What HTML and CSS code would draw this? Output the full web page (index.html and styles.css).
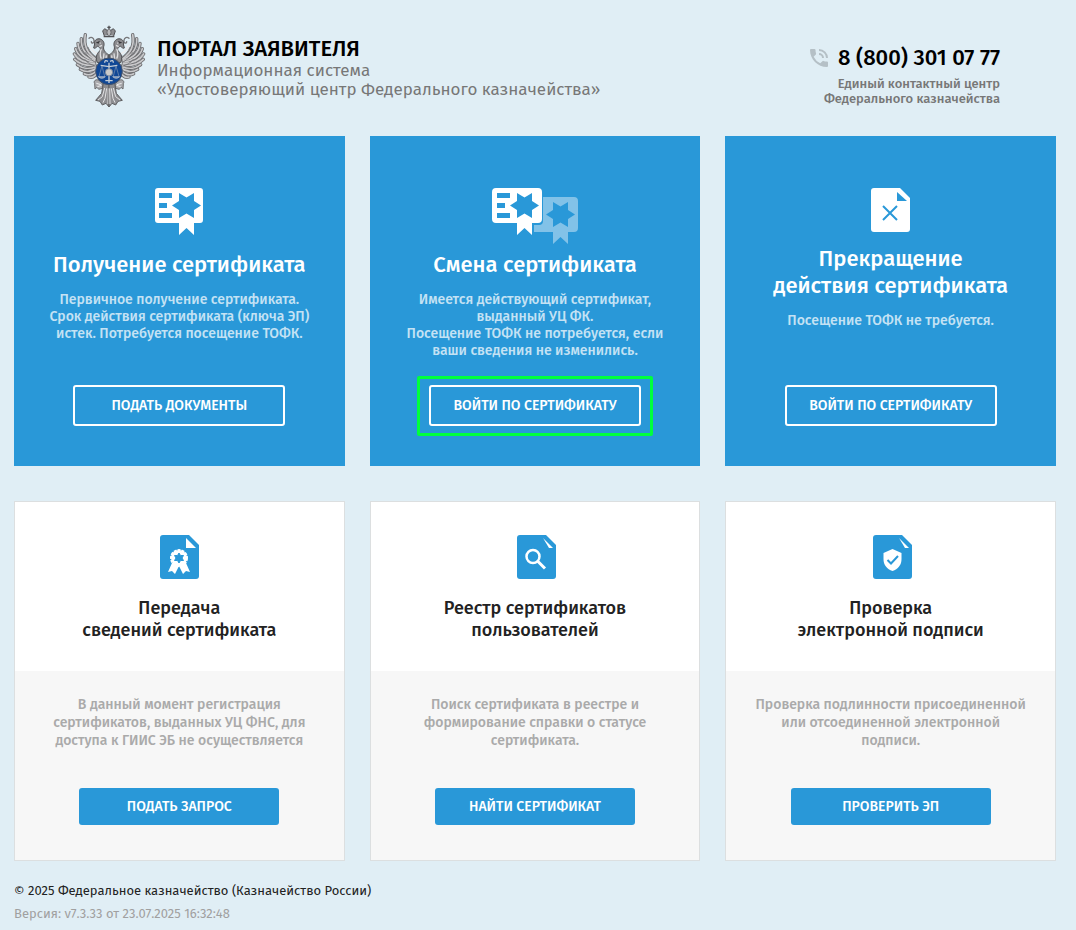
FILE: index.html
```
<!DOCTYPE html>
<html lang="ru">
<head>
  <meta charset="UTF-8">
  <meta name="viewport" content="width=device-width, initial-scale=1">
  <title>Портал заявителя</title>
  <link rel="stylesheet" href="styles.css">
</head>
<body>
  <!-- Shared shapes -->
  <svg class="defs" width="0" height="0" aria-hidden="true">
    <defs>
      <path id="cert" fill-rule="evenodd" d="M3 0H45a3 3 0 0 1 3 3V32a3 3 0 0 1-3 3H39V47L31.5 40 24 47V35H3a3 3 0 0 1-3-3V3a3 3 0 0 1 3-3ZM4 5V10H17V5ZM4 15V20H12V15ZM4 25V30H17V25ZM17 17.5L24 22V30L31.5 25.500L39 30V22L46 17.500L39 13V5L31.500 9.500L24 5V13Z"/>
      <path id="doc" d="M3 0H29L39 10V41a3 3 0 0 1-3 3H3a3 3 0 0 1-3-3V3a3 3 0 0 1 3-3Z"/>
      <g id="eagle-half">
        <g fill="none" stroke-linecap="round">
          <g stroke="#69696c" stroke-width="10">
            <path d="M106 128C82 112 70 88 76 56"/><path d="M104 130C78 118 62 98 64 68"/><path d="M104 134C76 126 56 108 54 82"/><path d="M104 138C74 134 52 118 47 98"/><path d="M104 143C76 142 54 132 43 114"/><path d="M106 148C80 150 58 144 44 130"/><path d="M108 152C88 160 66 158 52 146"/><path d="M110 156C96 168 76 170 61 160"/><path d="M112 160C102 176 86 180 73 173"/><path d="M114 164C108 180 98 186 87 183"/>
          </g>
          <g stroke="#c9c9cb" stroke-width="5">
            <path d="M106 128C82 112 70 88 76 56"/><path d="M104 130C78 118 62 98 64 68"/><path d="M104 134C76 126 56 108 54 82"/><path d="M104 138C74 134 52 118 47 98"/><path d="M104 143C76 142 54 132 43 114"/><path d="M106 148C80 150 58 144 44 130"/><path d="M108 152C88 160 66 158 52 146"/><path d="M110 156C96 168 76 170 61 160"/><path d="M112 160C102 176 86 180 73 173"/><path d="M114 164C108 180 98 186 87 183"/>
          </g>
          <path d="M84 94C90 108 98 118 112 124M76 110C86 126 96 134 106 138M74 130C84 142 94 148 106 150" stroke="#77777a" stroke-width="3"/>
          <path d="M88 88C94 102 104 112 118 116" stroke="#ececee" stroke-width="5"/>
          <path d="M87 67C93 61 101 65 102 73C104 82 94 84 94 77" stroke="#77777a" stroke-width="4"/>
        </g>
        <path d="M104 84C101 74 110 66 121 69C132 73 134 84 131 92C129 102 136 110 146 116V140H112C106 126 109 114 119 105C124 99 119 92 112 91C109 94 104 99 101 96C103 92 102 88 104 84Z" fill="#8c8c8f" stroke="#4d4d50" stroke-width="3"/>
        <path d="M113 78L122 82M118 92L126 88M124 98C120 108 118 116 124 128M132 112L130 130M139 118L137 136" stroke="#dedee0" stroke-width="4" fill="none"/>
        <path d="M107 80L119 74L118 83Z" fill="#39393c"/>
        <path d="M104 203C99 195 108 188 117 193L129 203L127 217L116 220L111 214L105 219Z" fill="#aaaaad" stroke="#6a6a6d" stroke-width="3"/>
        <path d="M109 202L123 206M112 212L125 208" stroke="#ececee" stroke-width="3"/>
        <path d="M130 202L125 232L107 253L120 256L127 267L138 262L147 273V202Z" fill="#8d8d90" stroke="#606063" stroke-width="3"/>
        <path d="M134 216L127 242L114 252M140 217L135 247L129 260M145 217L144 264" stroke="#e2e2e4" stroke-width="3" fill="none"/>
        <path d="M133 60L128 45L134 38L143 44L142 58" fill="#8d8d90" stroke="#505053" stroke-width="3"/>
      </g>
    </defs>
  </svg>

  <header class="header">
    <a class="brand" href="#">
      <svg class="emblem" viewBox="36 27 222 246" aria-hidden="true">
        <use href="#eagle-half"/>
        <use href="#eagle-half" transform="matrix(-1 0 0 1 294 0)"/>
        <path d="M147 29V40M142 34H152M131 62H163" stroke="#505053" stroke-width="4"/>
        <ellipse cx="147" cy="49" rx="6" ry="10" fill="#b9b9bb" stroke="#505053" stroke-width="2"/>
        <circle cx="147" cy="166" r="40" fill="#104795" stroke="#46546b" stroke-width="3"/>
        <g fill="none" stroke="#c3ccd6" stroke-width="4">
          <path d="M122 148L147 152L172 148M147 140V201M136 194H158"/>
          <path d="M126 150L117 181M126 150L134 181M168 150L160 181M168 150L177 181" stroke="#8095b3" stroke-width="2"/>
          <path d="M115 182Q125 192 136 182ZM158 182Q169 192 179 182Z" fill="#8095b3" stroke-width="2"/>
          <path d="M134 140Q134 130 144 136M160 140Q160 130 150 136"/>
        </g>
        <circle cx="147" cy="169" r="11" fill="#cacaca" stroke="#75869d" stroke-width="3"/>
      </svg>
      <span class="brand-text">
        <strong>ПОРТАЛ ЗАЯВИТЕЛЯ</strong>
        <span>Информационная система</span>
        <span>«Удостоверяющий центр Федерального казначейства»</span>
      </span>
    </a>
    <div class="contacts">
      <a class="phone" href="tel:88003010777">
        <svg width="18" height="18" viewBox="3 3 18 18" aria-hidden="true">
          <path fill="#b5c0c6" d="M20 15.500c-1.250 0-2.450-.2-3.570-.57a1 1 0 0 0-1.020.24l-2.200 2.200a15.070 15.070 0 0 1-6.590-6.580l2.200-2.210a1 1 0 0 0 .25-1.010A11.360 11.360 0 0 1 8.500 4a1 1 0 0 0-1-1H4a1 1 0 0 0-1 1c0 9.390 7.610 17 17 17a1 1 0 0 0 1-1v-3.500a1 1 0 0 0-1-1ZM19 12h2a9 9 0 0 0-9-9v2a7 7 0 0 1 7 7Zm-4 0h2a5 5 0 0 0-5-5v2a3 3 0 0 1 3 3Z"/>
        </svg>
        8 (800) 301 07 77
      </a>
      <p>Единый контактный центр<br>Федерального казначейства</p>
    </div>
  </header>

  <main class="cards">
    <section class="card card-blue">
      <svg class="icon" width="48" height="47" viewBox="0 0 48 47" aria-hidden="true"><use href="#cert" fill="#fff"/></svg>
      <h2>Получение сертификата</h2>
      <p>Первичное получение сертификата.<br>Срок действия сертификата (ключа ЭП)<br>истек. Потребуется посещение ТОФК.</p>
      <div class="action"><button type="button">ПОДАТЬ ДОКУМЕНТЫ</button></div>
    </section>

    <section class="card card-blue">
      <svg class="icon icon-change" width="86" height="56" viewBox="0 0 86 56" aria-hidden="true">
        <path fill="#82c2e8" fill-rule="evenodd" d="M42 9H82a4 4 0 0 1 4 4V40a4 4 0 0 1-4 4H76V56L68.500 49 61 56V44H42ZM54 26.500L61 31V39L68.500 34.500L76 39V31L83 26.500L76 22V14L68.500 18.500L61 14V22Z"/>
        <path fill="#2998d8" d="M0 0H51V33Q51 37 47 37H42V49H38L32 43L25 49V35H0Z"/>
        <path fill="#fff" fill-rule="evenodd" d="M4 0H46a4 4 0 0 1 4 4V31a4 4 0 0 1-4 4H40V47L32.500 40 25 47V35H4a4 4 0 0 1-4-4V4a4 4 0 0 1 4-4ZM5 5V10H18V5ZM5 15V20H13V15ZM5 25V30H18V25ZM18 17.500L25 22V30L32.500 25.500L40 30V22L47 17.500L40 13V5L32.500 9.500L25 5V13Z"/>
      </svg>
      <h2>Смена сертификата</h2>
      <p>Имеется действующий сертификат,<br>выданный УЦ ФК.<br>Посещение ТОФК не потребуется, если<br>ваши сведения не изменились.</p>
      <div class="action action-marked"><button type="button">ВОЙТИ ПО СЕРТИФИКАТУ</button></div>
    </section>

    <section class="card card-blue">
      <svg class="icon icon-doc" width="39" height="44" viewBox="0 0 39 44" aria-hidden="true">
        <use href="#doc" fill="#fff"/>
        <path fill="#2998d8" d="M26 4L36 13H26Z"/>
        <path d="M12 18L26 32M26 18L12 32" stroke="#2998d8" stroke-width="2"/>
      </svg>
      <h2>Прекращение<br>действия сертификата</h2>
      <p>Посещение ТОФК не требуется.</p>
      <div class="action"><button type="button">ВОЙТИ ПО СЕРТИФИКАТУ</button></div>
    </section>

    <section class="card card-white">
      <div class="card-head">
        <svg width="39" height="44" viewBox="0 0 39 44" aria-hidden="true">
          <use href="#doc" fill="#2998d8"/>
          <path fill="#fff" d="M26 3L36 13H26Z"/>
          <path fill="#fff" d="M12 28L8 37L12 36L15 39L19 31L23 39L26 36L30 37L26 28Z"/>
          <circle cx="19" cy="23" r="8" fill="#fff" stroke="#fff" stroke-width="2" stroke-dasharray="3 1"/>
          <path fill="#2998d8" d="M19 18L20.500 20.500H23.500L22 23L23.500 25.500H20.500L19 28L17.500 25.500H14.500L16 23L14.500 20.500H17.500Z" stroke="#2998d8"/>
        </svg>
        <h3>Передача<br>сведений сертификата</h3>
      </div>
      <div class="card-body">
        <p>В данный момент регистрация<br>сертификатов, выданных УЦ ФНС, для<br>доступа к ГИИС ЭБ не осуществляется</p>
        <button type="button">ПОДАТЬ ЗАПРОС</button>
      </div>
    </section>

    <section class="card card-white">
      <div class="card-head">
        <svg width="43" height="44" viewBox="-4 0 43 44" aria-hidden="true">
          <use href="#doc" fill="#2998d8"/>
          <path fill="#fff" d="M26 3L36 13H32Z"/>
          <circle cx="16" cy="21.500" r="6.500" fill="none" stroke="#fff" stroke-width="2.500"/>
          <path d="M20.500 26L28 33.500" stroke="#fff" stroke-width="3"/>
        </svg>
        <h3>Реестр сертификатов<br>пользователей</h3>
      </div>
      <div class="card-body">
        <p>Поиск сертификата в реестре и<br>формирование справки о статусе<br>сертификата.</p>
        <button type="button">НАЙТИ СЕРТИФИКАТ</button>
      </div>
    </section>

    <section class="card card-white">
      <div class="card-head">
        <svg width="43" height="44" viewBox="-4 0 43 44" aria-hidden="true">
          <use href="#doc" fill="#2998d8"/>
          <path fill="#fff" d="M26 3L36 13H32Z"/>
          <path fill="#fff" d="M19.500 14L28.500 18V24C28.500 30 25 34 19.500 36C14 34 10.500 30 10.500 24V18Z"/>
          <path d="M14.500 25L18 28.500L25 21" fill="none" stroke="#2998d8" stroke-width="2"/>
        </svg>
        <h3>Проверка<br>электронной подписи</h3>
      </div>
      <div class="card-body">
        <p>Проверка подлинности присоединенной<br>или отсоединенной электронной<br>подписи.</p>
        <button type="button">ПРОВЕРИТЬ ЭП</button>
      </div>
    </section>
  </main>

  <footer class="footer">
    <p>© 2025 Федеральное казначейство (Казначейство России)</p>
    <p class="version">Версия: v7.3.33 от 23.07.2025 16:32:48</p>
  </footer>
</body>
</html>
```

FILE: styles.css
```
* {
  box-sizing: border-box;
}

body {
  margin: 0;
  padding: 0 20px 0 14px;
  background-color: #e0eef5;
  font-family: "Fira Sans", "Noto Sans", sans-serif;
  color: #222;
}

h2, h3, p {
  margin: 0;
  font-weight: 400;
}

a {
  color: inherit;
  text-decoration: none;
}

.defs {
  position: absolute;
}

/* Header */
.header {
  display: flex;
  justify-content: space-between;
  height: 136px;
  padding: 25px 56px 0 58px;
}

.brand {
  display: flex;
  gap: 11px;
}

.emblem {
  width: 74px;
  height: 82px;
}

.brand-text {
  display: flex;
  flex-direction: column;
  padding-top: 12px;
  font-size: 17px;
  line-height: 19px;
  color: #777;
}

.brand-text strong {
  font-size: 22px;
  font-weight: 500;
  line-height: 24px;
  color: #000;
}

.contacts {
  padding-top: 19px;
  text-align: right;
}

.phone {
  display: flex;
  align-items: center;
  justify-content: flex-end;
  gap: 10px;
  font-size: 22px;
  font-weight: 500;
  line-height: 28px;
  color: #000;
}

.contacts p {
  margin-top: 4px;
  font-size: 13px;
  font-weight: 500;
  line-height: 15px;
  color: #777;
}

/* Cards */
.cards {
  display: grid;
  grid-template-columns: repeat(3, 1fr);
  gap: 35px 25px;
}

.card {
  display: flex;
  flex-direction: column;
  text-align: center;
}

.card-blue {
  align-items: center;
  min-height: 330px;
  padding: 52px 20px 30px;
  background-color: #2998d8;
  color: #fff;
}

.icon {
  flex: none;
  margin-bottom: 16px;
}

.icon-change {
  margin-bottom: 7px;
}

.icon-doc {
  margin-bottom: 13px;
}

.card h2 {
  font-size: 22px;
  font-weight: 500;
  line-height: 27px;
}

.card-blue p {
  margin-top: 13px;
  font-size: 14px;
  font-weight: 500;
  line-height: 17px;
  color: #c4e2f4;
}

button {
  border: 0;
  border-radius: 3px;
  font-family: inherit;
  font-size: 14px;
  font-weight: 500;
  color: #fff;
  cursor: pointer;
}

.action {
  margin-top: auto;
  padding: 6px 9px 7px;
  border: 3px solid transparent;
}

.action-marked {
  border-color: #00ff3c;
  border-radius: 2px;
}

.action button {
  display: block;
  width: 212px;
  height: 41px;
  border: 2px solid #fff;
  background: none;
}

.card-white {
  min-height: 360px;
  border: 1px solid #dcdfe0;
  background-color: #f7f7f7;
}

.card-head {
  height: 169px;
  padding-top: 33px;
  background-color: #fff;
}

.card-head svg {
  display: block;
  margin: 0 auto 18px;
}

.card h3 {
  font-size: 18px;
  font-weight: 500;
  line-height: 22px;
}

.card-body {
  display: flex;
  flex: 1;
  flex-direction: column;
  align-items: center;
  justify-content: space-between;
  padding: 25px 20px 35px;
}

.card-body p {
  font-size: 14px;
  font-weight: 500;
  line-height: 18px;
  color: #aaa;
}

.card-body button {
  width: 200px;
  height: 37px;
  background-color: #2998d8;
}

/* Footer */
.footer {
  padding-top: 18px;
  font-size: 13px;
  line-height: 23px;
}

.footer .version {
  color: #a0a0a0;
}
```
